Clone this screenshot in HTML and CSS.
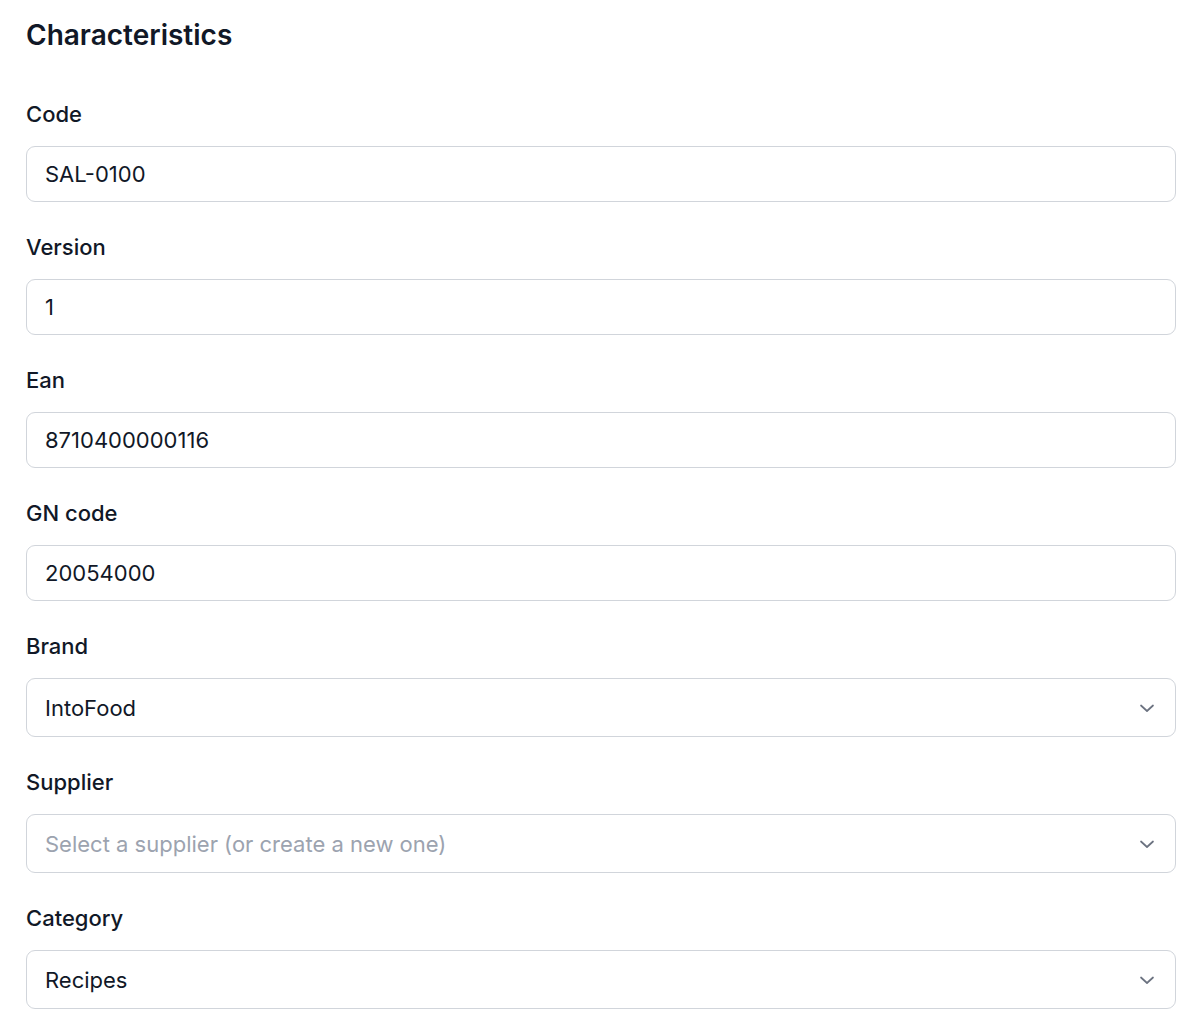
FILE: index.html
```html
<!DOCTYPE html>
<html>
<head>
<meta charset="utf-8">
<link rel="stylesheet" href="styles.css">
</head>
<body>
<div class="panel">
  <h2 class="title">Characteristics</h2>
  <div class="fields">
    <div class="field">
      <label class="label">Code</label>
      <div class="input">SAL-0100</div>
    </div>
    <div class="field">
      <label class="label">Version</label>
      <div class="input">1</div>
    </div>
    <div class="field">
      <label class="label">Ean</label>
      <div class="input">8710400000116</div>
    </div>
    <div class="field">
      <label class="label">GN code</label>
      <div class="input">20054000</div>
    </div>
    <div class="field">
      <label class="label">Brand</label>
      <div class="input select"><span>IntoFood</span>
        <svg class="chev" viewBox="0 0 20 20" width="20" height="20"><path d="M4 7.5l6 5.5 6-5.5" fill="none" stroke="#6b7280" stroke-width="1.7" stroke-linecap="round" stroke-linejoin="round"/></svg>
      </div>
    </div>
    <div class="field">
      <label class="label">Supplier</label>
      <div class="input select"><span class="placeholder">Select a supplier (or create a new one)</span>
        <svg class="chev" viewBox="0 0 20 20" width="20" height="20"><path d="M4 7.5l6 5.5 6-5.5" fill="none" stroke="#6b7280" stroke-width="1.7" stroke-linecap="round" stroke-linejoin="round"/></svg>
      </div>
    </div>
    <div class="field">
      <label class="label">Category</label>
      <div class="input select"><span>Recipes</span>
        <svg class="chev" viewBox="0 0 20 20" width="20" height="20"><path d="M4 7.5l6 5.5 6-5.5" fill="none" stroke="#6b7280" stroke-width="1.7" stroke-linecap="round" stroke-linejoin="round"/></svg>
      </div>
    </div>
  </div>
</div>
</body>
</html>
```
FILE: styles.css
```css
* { box-sizing: border-box; }
html, body { margin: 0; background: #ffffff; }
body {
  font-family: Inter, "Noto Sans", sans-serif;
  color: #111827;
}
.panel {
  padding: 17px 24px 0 26px;
}
.title {
  margin: 0;
  font-size: 28px;
  line-height: 36px;
  font-weight: 600;
  color: #111827;
}
.fields {
  margin-top: 46px;
  display: flex;
  flex-direction: column;
  gap: 30px;
}
.field {
  display: flex;
  flex-direction: column;
  gap: 17px;
}
.label {
  display: block;
  font-size: 22px;
  line-height: 30px;
  font-weight: 500;
  color: #111827;
}
.input {
  height: 56px;
  border: 1.5px solid #d1d5db;
  border-radius: 9px;
  padding: 0 18px;
  display: flex;
  align-items: center;
  font-size: 22px;
  color: #111827;
}
.select {
  height: 59px;
  justify-content: space-between;
  padding-right: 18px;
}
.placeholder { color: #9ca3af; }
.chev { flex: none; }
```
